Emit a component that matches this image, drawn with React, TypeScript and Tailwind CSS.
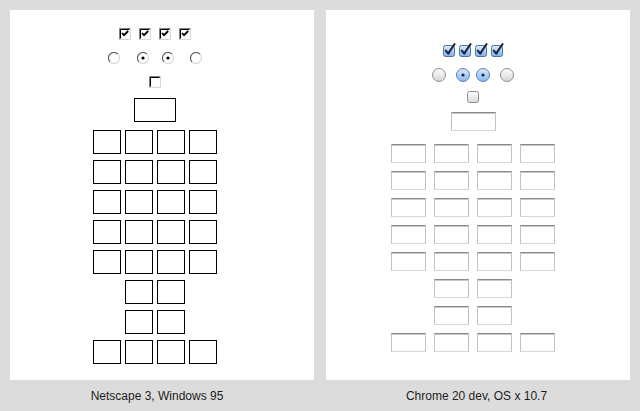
import React from "react";

function Win95Check({ checked = true }: { checked?: boolean }) {
  return (
    <svg width="12" height="12" viewBox="0 0 12 12" className="block">
      <rect x="0" y="0" width="12" height="12" fill="#fff" />
      <path d="M0.5 11.5V0.5H11.5" fill="none" stroke="#808080" />
      <path d="M1.5 10.5V1.5H10.5" fill="none" stroke="#000" />
      <path d="M0.5 11.5H11.5V0.5" fill="none" stroke="#d6d6d6" />
      {checked && <path d="M3 5l2 2.2L9.2 3" fill="none" stroke="#000" strokeWidth="1.8" />}
    </svg>
  );
}

function Win95Radio({ checked = false }: { checked?: boolean }) {
  return (
    <svg width="12" height="12" viewBox="0 0 12 12" className="block">
      <circle cx="6" cy="6" r="5.5" fill="#fff" />
      <path d="M2.1 9.9A5.5 5.5 0 0 1 9.9 2.1" fill="none" stroke="#555" strokeWidth="1.1" />
      <path d="M9.9 2.1A5.5 5.5 0 0 1 2.1 9.9" fill="none" stroke="#d8d8d8" strokeWidth="1.1" />
      {checked && <circle cx="6" cy="6" r="1.6" fill="#000" />}
    </svg>
  );
}

function MacCheck({ checked = true }: { checked?: boolean }) {
  return (
    <svg width="13" height="14" viewBox="0 0 13 14" className="block overflow-visible">
      <defs>
        <linearGradient id="macBlue" x1="0" y1="0" x2="0" y2="1">
          <stop offset="0" stopColor="#e2eefc" />
          <stop offset="1" stopColor="#7eaee9" />
        </linearGradient>
        <linearGradient id="macGray" x1="0" y1="0" x2="0" y2="1">
          <stop offset="0" stopColor="#ffffff" />
          <stop offset="1" stopColor="#d9d9d9" />
        </linearGradient>
      </defs>
      <rect
        x="0.5"
        y="2.5"
        width="11"
        height="11"
        rx="2"
        fill={checked ? "url(#macBlue)" : "url(#macGray)"}
        stroke={checked ? "#4f74a8" : "#8c8c8c"}
      />
      {checked && (
        <path d="M2.8 7.6l2.4 3L11.6 1" fill="none" stroke="#14213d" strokeWidth="2" strokeLinecap="round" strokeLinejoin="round" />
      )}
    </svg>
  );
}

function MacRadio({ checked = false }: { checked?: boolean }) {
  return (
    <svg width="14" height="14" viewBox="0 0 14 14" className="block">
      <defs>
        <linearGradient id="radBlue" x1="0" y1="0" x2="0" y2="1">
          <stop offset="0" stopColor="#dbe9fb" />
          <stop offset="1" stopColor="#88b8ef" />
        </linearGradient>
        <linearGradient id="radGray" x1="0" y1="0" x2="0" y2="1">
          <stop offset="0" stopColor="#ffffff" />
          <stop offset="1" stopColor="#d6d6d6" />
        </linearGradient>
      </defs>
      <circle
        cx="7"
        cy="7"
        r="6.5"
        fill={checked ? "url(#radBlue)" : "url(#radGray)"}
        stroke={checked ? "#5a80b6" : "#8e8e8e"}
      />
      {checked && <circle cx="7" cy="7" r="1.6" fill="#1a2740" />}
    </svg>
  );
}

const rows = [4, 4, 4, 4, 4, 2, 2, 4];

function WinBox() {
  return <div className="h-[24px] w-[28px] border border-black bg-white" />;
}

function MacBox() {
  return (
    <div className="h-[19px] w-[35px] border border-t-[#8a8a8a] border-x-[#c2c2c2] border-b-[#d6d6d6] bg-white shadow-[inset_0_1px_0_#c8c8c8]" />
  );
}

export default function App() {
  return (
    <div className="flex h-[411px] w-[640px] gap-[12px] bg-[#dcdcdc] pl-[10px] font-['Liberation_Sans',Arial,sans-serif]">
      {/* Netscape */}
      <div className="flex w-[304px] flex-col">
        <div className="mt-[10px] flex h-[370px] flex-col items-center bg-white pr-[14px]">
          <div className="mt-[18px] flex gap-[8px]">
            <Win95Check />
            <Win95Check />
            <Win95Check />
            <Win95Check />
          </div>
          <div className="mt-[12px] flex">
            <Win95Radio />
            <div className="ml-[17px]">
              <Win95Radio checked />
            </div>
            <div className="ml-[13px]">
              <Win95Radio checked />
            </div>
            <div className="ml-[16px]">
              <Win95Radio />
            </div>
          </div>
          <div className="mt-[12px]">
            <Win95Check checked={false} />
          </div>
          <div className="mt-[10px] h-[24px] w-[42px] border border-black" />
          <div className="mt-[8px] grid grid-cols-4 gap-x-[4px] gap-y-[6px]">
            {rows.map((n, r) =>
              n === 4 ? (
                [0, 1, 2, 3].map((c) => <WinBox key={`${r}-${c}`} />)
              ) : (
                <React.Fragment key={r}>
                  <div />
                  <WinBox />
                  <WinBox />
                  <div />
                </React.Fragment>
              )
            )}
          </div>
        </div>
        <div className="flex h-[31px] items-center justify-center pr-[10px] text-[12px] text-[#1c1c1c]">
          Netscape 3, Windows 95
        </div>
      </div>

      {/* Chrome */}
      <div className="flex w-[304px] flex-col">
        <div className="mt-[10px] flex h-[370px] flex-col items-center bg-white pr-[10px]">
          <div className="mt-[33px] flex gap-[3px]">
            <MacCheck />
            <MacCheck />
            <MacCheck />
            <MacCheck />
          </div>
          <div className="mt-[11px] flex">
            <MacRadio />
            <div className="ml-[10px]">
              <MacRadio checked />
            </div>
            <div className="ml-[6px]">
              <MacRadio checked />
            </div>
            <div className="ml-[10px]">
              <MacRadio />
            </div>
          </div>
          <div className="mt-[9px] -mt-[0px]">
            <svg width="12" height="12" viewBox="0 0 12 12" className="block">
              <defs>
                <linearGradient id="sq" x1="0" y1="0" x2="0" y2="1">
                  <stop offset="0" stopColor="#ffffff" />
                  <stop offset="1" stopColor="#d9d9d9" />
                </linearGradient>
              </defs>
              <rect x="0.5" y="0.5" width="11" height="11" rx="2" fill="url(#sq)" stroke="#8c8c8c" />
            </svg>
          </div>
          <div className="mt-[9px] h-[19px] w-[45px] border border-t-[#8a8a8a] border-x-[#c2c2c2] border-b-[#d6d6d6] bg-white shadow-[inset_0_1px_0_#c8c8c8]" />
          <div className="mt-[13px] grid grid-cols-4 gap-x-[8px] gap-y-[8px]">
            {rows.map((n, r) =>
              n === 4 ? (
                [0, 1, 2, 3].map((c) => <MacBox key={`${r}-${c}`} />)
              ) : (
                <React.Fragment key={r}>
                  <div />
                  <MacBox />
                  <MacBox />
                  <div />
                </React.Fragment>
              )
            )}
          </div>
        </div>
        <div className="flex h-[31px] items-center justify-center pr-[3px] text-[12px] text-[#1c1c1c]">
          Chrome 20 dev, OS x 10.7
        </div>
      </div>
    </div>
  );
}
